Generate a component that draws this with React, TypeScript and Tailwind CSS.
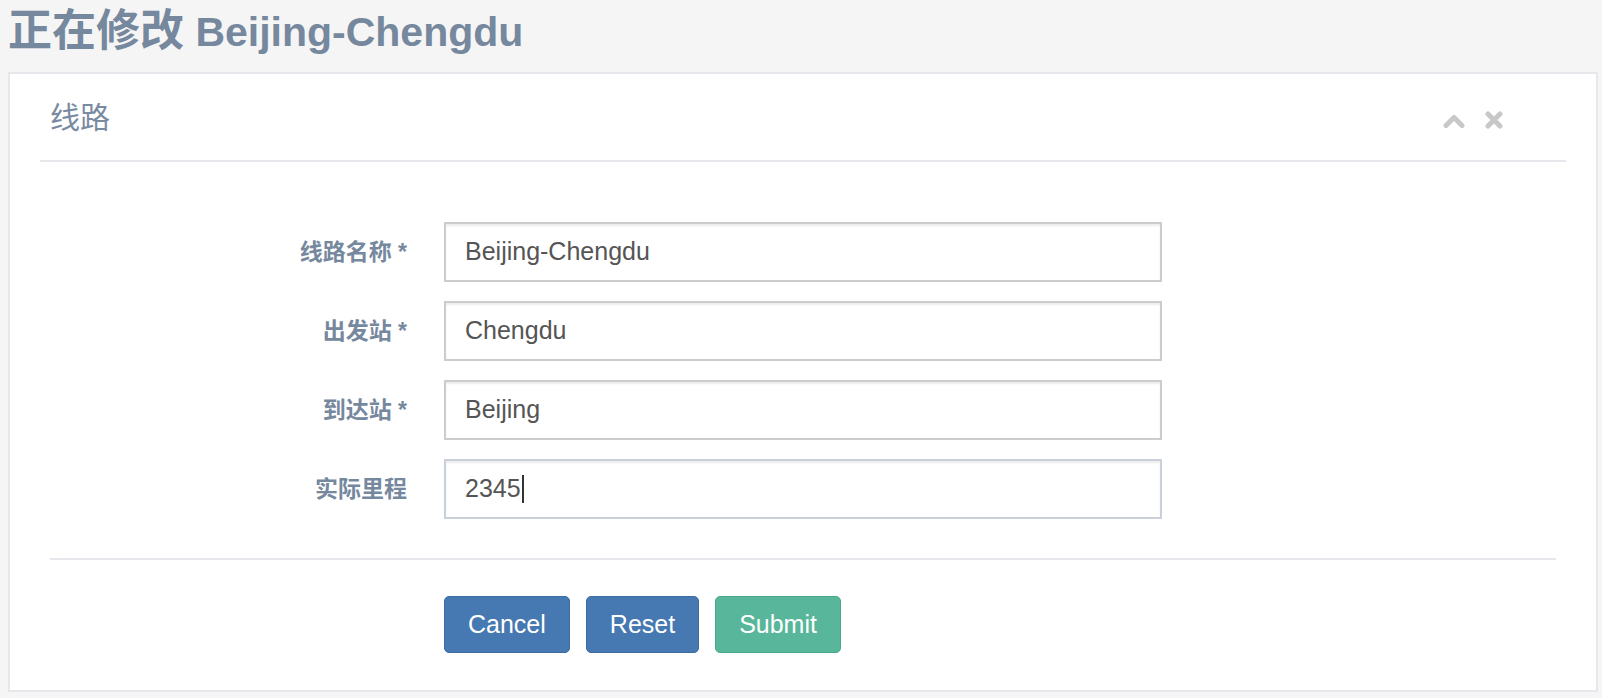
import React from "react";

interface IFieldProps {
    label: string;
    value: string;
    required?: boolean;
    focused?: boolean;
}

const Field: React.FC<IFieldProps> = ({ label, value, required = false, focused = false }) => {
    return (
        <div className="flex h-[60px] items-center">
            <label className="w-[358px] pr-[1px] text-right text-[23px] font-bold text-[#76889e]">
                {label}{required && ' *'}
            </label>
            <div
                className={`ml-[36px] flex h-[60px] w-[718px] items-center border-2 bg-white px-[19px] text-[25px] text-[#555555] shadow-[inset_0_2px_2px_rgba(0,0,0,0.075)] ${focused ? 'border-[#c9d0da]' : 'border-[#cccccc]'}`}>
                <span>{value}</span>
                {focused && <span className="ml-[1px] h-[28px] w-[2px] bg-[#333333]"/>}
            </div>
        </div>
    )
}

const ChevronUp = () => (
    <svg width="24" height="17" viewBox="0 0 24 17" fill="none">
        <polyline points="4,13.5 12,5.5 20,13.5" stroke="#c8c8c8" strokeWidth="5" strokeLinecap="round"
                  strokeLinejoin="round"/>
    </svg>
)

const Close = () => (
    <svg width="20" height="18" viewBox="0 0 20 18" fill="none">
        <line x1="4" y1="3" x2="16" y2="15" stroke="#c8c8c8" strokeWidth="5" strokeLinecap="round"/>
        <line x1="16" y1="3" x2="4" y2="15" stroke="#c8c8c8" strokeWidth="5" strokeLinecap="round"/>
    </svg>
)

export default function App() {
    return (
        <div className="h-[698px] overflow-hidden bg-[#f5f5f5] pl-[8px] pr-[4px] font-['Liberation_Sans','Noto_Sans_CJK_SC',sans-serif]">
            <h1 className="h-[72px] pt-[11px] text-[41px] leading-[40px] font-bold text-[#76889e]">
                <span className="text-[44px] leading-[40px]">正在修改</span> Beijing-Chengdu
            </h1>

            <div className="border-2 border-[#e6e7eb] bg-white">
                <div className="mx-[30px] flex h-[88px] items-center border-b-2 border-[#e6e7eb] pt-[2px] pr-[62px] pl-[10px]">
                    <h2 className="flex-1 text-[30px] leading-[30px] text-[#7a8ba1]">线路</h2>
                    <div className="flex items-center gap-[18px] pt-[4px]">
                        <ChevronUp/>
                        <Close/>
                    </div>
                </div>

                <div className="px-[40px]">
                    <div className="flex flex-col gap-[19px] pt-[60px] pb-[39px]">
                        <Field label="线路名称" value="Beijing-Chengdu" required/>
                        <Field label="出发站" value="Chengdu" required/>
                        <Field label="到达站" value="Beijing" required/>
                        <Field label="实际里程" value="2345" focused/>
                    </div>

                    <div className="border-t-2 border-[#e6e7eb] pt-[36px] pb-[37px]">
                        <div className="ml-[394px] flex gap-[16px]">
                            <button type="button"
                                    className="h-[57px] rounded-[5px] border border-[#3d6aa1] bg-[#4678b1] px-[23px] text-[25px] text-white">
                                Cancel
                            </button>
                            <button type="button"
                                    className="h-[57px] rounded-[5px] border border-[#3d6aa1] bg-[#4678b1] px-[23px] text-[25px] text-white">
                                Reset
                            </button>
                            <button type="submit"
                                    className="h-[57px] rounded-[5px] border border-[#4aa88b] bg-[#58b69a] px-[23px] text-[25px] text-white">
                                Submit
                            </button>
                        </div>
                    </div>
                </div>
            </div>
        </div>
    )
}
